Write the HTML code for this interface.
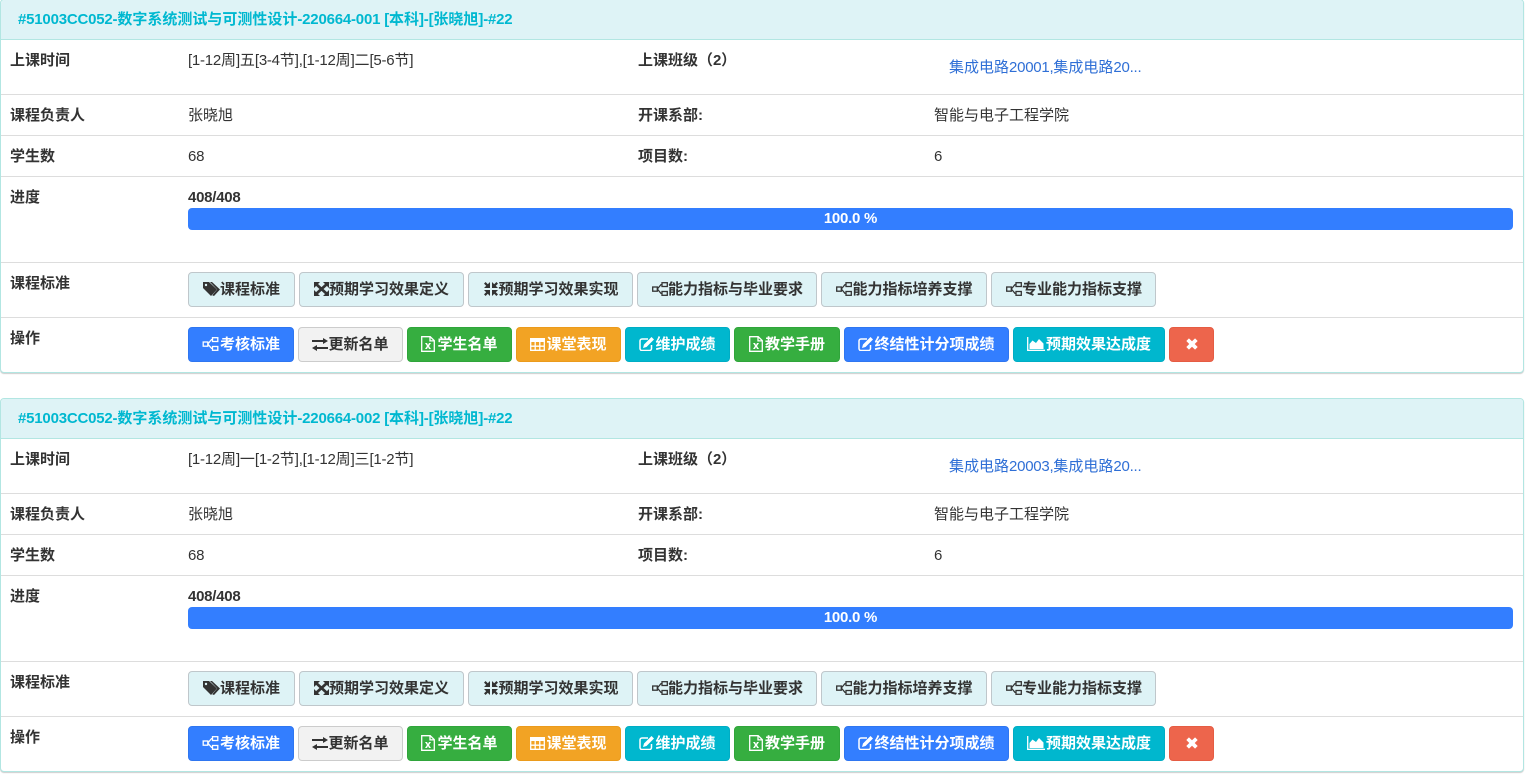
<!DOCTYPE html>
<html><head><meta charset="utf-8"><style>
html,body{margin:0;padding:0;background:#fff;width:1531px;height:783px;overflow:hidden}
body{font:15px/20px "Liberation Sans","Noto Sans CJK SC",sans-serif;color:#333}
i{font-style:normal;letter-spacing:-.25px}
.p{position:absolute;left:0;width:1522px;height:372px;border:1px solid #b2e6e2;border-radius:4px;background:#fff;box-shadow:0 1px 1px rgba(0,0,0,.2)}
.p>*{position:absolute;white-space:nowrap}
.h{left:0;top:0;width:1522px;height:39px;background:#def3f6;border-bottom:1px solid #b2e6e2;border-radius:3px 3px 0 0}
.t{left:17px;top:10px;font-weight:700;color:#00b8d0}
.t i{letter-spacing:-.2px}
.l{height:1px;left:0;width:1522px;background:#ddd}
b{font-weight:700}
.a{color:#2f6fd6}
.bar{left:187px;top:208px;width:1325px;height:22px;background:#337eff;border-radius:4px;color:#fff;font-weight:700;text-align:center;line-height:21px}
.btn{box-sizing:border-box;height:35px;border:1px solid;border-radius:4px;font-weight:700;line-height:33px;text-align:center;top:0}
.btn svg{vertical-align:-2px}
.btn svg.x{vertical-align:-3px;margin-right:2px}
.btn svg.m{margin-left:1px}
.s{background:#def3f6;border-color:#bfc7cb;color:#333;top:272px}
.o{top:327px;color:#fff}
.blue{background:#337eff;border-color:#2f76f0}
.gray{background:#f2f2f2;border-color:#ccc;color:#333}
.green{background:#36ae40;border-color:#30a53b}
.orange{background:#f2a324;border-color:#eb9b1c}
.cyan{background:#00b7ce;border-color:#00adc4}
.red{background:#ed654c;border-color:#e55c43}
</style></head><body>
<svg width="0" height="0" style="position:absolute">
<symbol id="tag" viewBox="0 0 17 14"><path d="M0 0h6l8 7.500-6 6.500L0 6z" fill="currentColor"/><path d="M9 0l8 7.500-6 6.500-1.800-.8 5-5.700L7 0z" fill="currentColor"/><circle cx="3" cy="3" r="1.200" fill="#def3f6"/></symbol>
<symbol id="exp" viewBox="0 0 15 14"><path d="M0 0h6L0 6zM15 0v6L9 0zM0 14V8l6 6zM15 14H9l6-6z" fill="currentColor"/><path d="M2 2l11 10M13 2L2 12" stroke="currentColor" stroke-width="2.800" fill="none"/></symbol>
<symbol id="com" viewBox="0 0 14 14"><path d="M6 6V0L0 6zM8 6V0l6 6zM6 8v6L0 8zM8 8v6l6-6z" fill="currentColor"/><path d="M.8.800l3 3M13.200.8l-3 3M.8 13.200l3-3M13.200 13.200l-3-3" stroke="currentColor" stroke-width="2.200" fill="none"/></symbol>
<symbol id="sit" viewBox="0 0 16 14"><g fill="none" stroke="currentColor" stroke-width="1.300"><rect x=".7" y="5" width="4.600" height="4.200"/><rect x="10" y=".7" width="5.300" height="3.800"/><rect x="10" y="9.500" width="5.300" height="3.800"/><path d="M5.300 7L9 2.600h1M5.300 7L9 11.400h1"/></g></symbol>
<symbol id="exc" viewBox="0 0 16 13"><path d="M0 2h11V0l5 3-5 3V4H0zM16 9H5V7l-5 3 5 3v-2h11z" fill="currentColor"/></symbol>
<symbol id="xls" viewBox="0 0 14 16"><path d="M.7.700h8.500l4.100 4v10.600H.7zM9 .7v4.200h4.300" fill="none" stroke="currentColor" stroke-width="1.300"/><path d="M4 7h2l1 2 1-2h2L8 10l2 3H8l-1-2-1 2H4l2-3z" fill="currentColor"/></symbol>
<symbol id="tab" viewBox="0 0 15 13"><path d="M0 0h15v4H0z" fill="currentColor"/><path d="M.7.700h13.600v11.600H.7zM.7 8.200h13.600M5.200 4v8M9.800 4v8" fill="none" stroke="currentColor" stroke-width="1.300"/></symbol>
<symbol id="edt" viewBox="0 0 15 14"><path d="M9 2H3A2 2 0 0 0 1 4v7.500a2 2 0 0 0 2 2h7.500a2 2 0 0 0 2-2V8" fill="none" stroke="currentColor" stroke-width="1.500"/><path d="M12.500 0L15 2.500 7.500 10 4 11l1-3.500z" fill="currentColor"/></symbol>
<symbol id="are" viewBox="0 0 18 14"><path d="M.7 0v13.300H18" fill="none" stroke="currentColor" stroke-width="1.300"/><path d="M2.500 12V7l3-3.500L9 6l3-4 4.500 4.500V12z" fill="currentColor"/></symbol>
<symbol id="xx" viewBox="0 0 11 11"><path d="M2.700.3L5.500 3 8.300.3l2.400 2.400L8 5.500l2.700 2.800-2.400 2.400L5.500 8l-2.800 2.700L.3 8.300 3 5.500.3 2.700z" fill="currentColor"/></symbol>
</svg>

<div class="p" style="top:-1px">
<div class="h"></div><div class="t"><i>#51003CC052-</i>数字系统测试与可测性设计<i>-220664-001 [</i>本科<i>]-[</i>张晓旭<i>]-#22</i></div>
<b style="left:9px;top:51px">上课时间</b><span style="left:187px;top:51px"><i>[1-12</i>周<i>]</i>五<i>[3-4</i>节<i>],[1-12</i>周<i>]</i>二<i>[5-6</i>节<i>]</i></span>
<b style="left:637px;top:51px">上课班级（<i>2</i>）</b><span class="a" style="left:948px;top:58px">集成电路<i>20001,</i>集成电路<i>20...</i></span>
<div class="l" style="top:94px"></div>
<b style="left:9px;top:106px">课程负责人</b><span style="left:187px;top:106px">张晓旭</span><b style="left:637px;top:106px">开课系部<i>:</i></b><span style="left:933px;top:106px">智能与电子工程学院</span>
<div class="l" style="top:135px"></div>
<b style="left:9px;top:147px">学生数</b><span style="left:187px;top:147px"><i>68</i></span><b style="left:637px;top:147px">项目数<i>:</i></b><span style="left:933px;top:147px"><i>6</i></span>
<div class="l" style="top:176px"></div>
<b style="left:9px;top:188px">进度</b><b style="left:187px;top:188px"><i>408/408</i></b><div class="bar"><i>100.0 %</i></div>
<div class="l" style="top:262px"></div>
<b style="left:9px;top:274px">课程标准</b>
<div class="btn s" style="left:187px;width:107px"><svg width="17" height="14"><use href="#tag"/></svg>课程标准</div>
<div class="btn s" style="left:298px;width:165px"><svg width="15" height="14"><use href="#exp"/></svg>预期学习效果定义</div>
<div class="btn s" style="left:467px;width:165px"><svg width="14" height="14" style="margin-left:2px"><use href="#com"/></svg>预期学习效果实现</div>
<div class="btn s" style="left:636px;width:180px"><svg class="m" width="16" height="14"><use href="#sit"/></svg>能力指标与毕业要求</div>
<div class="btn s" style="left:820px;width:166px"><svg class="m" width="16" height="14"><use href="#sit"/></svg>能力指标培养支撑</div>
<div class="btn s" style="left:990px;width:165px"><svg class="m" width="16" height="14"><use href="#sit"/></svg>专业能力指标支撑</div>
<div class="l" style="top:317px"></div>
<b style="left:9px;top:329px">操作</b>
<div class="btn o blue" style="left:187px;width:106px"><svg width="17" height="14" style="margin-right:1px"><use href="#sit"/></svg>考核标准</div>
<div class="btn o gray" style="left:297px;width:105px"><svg width="16" height="13"><use href="#exc"/></svg>更新名单</div>
<div class="btn o green" style="left:406px;width:105px"><svg class="x" width="14" height="16"><use href="#xls"/></svg>学生名单</div>
<div class="btn o orange" style="left:515px;width:105px"><svg width="15" height="13" style="margin-right:1px"><use href="#tab"/></svg>课堂表现</div>
<div class="btn o cyan" style="left:624px;width:105px"><svg width="15" height="14" style="margin-right:1px"><use href="#edt"/></svg>维护成绩</div>
<div class="btn o green" style="left:733px;width:106px"><svg class="x" width="14" height="16"><use href="#xls"/></svg>教学手册</div>
<div class="btn o blue" style="left:843px;width:165px"><svg width="15" height="14" style="margin-right:1px"><use href="#edt"/></svg>终结性计分项成绩</div>
<div class="btn o cyan" style="left:1012px;width:152px"><svg width="18" height="14" style="margin-right:1px"><use href="#are"/></svg>预期效果达成度</div>
<div class="btn o red" style="left:1168px;width:45px"><svg width="12" height="12" style="vertical-align:-1px"><use href="#xx"/></svg></div>
</div>

<div class="p" style="top:398px">
<div class="h"></div><div class="t"><i>#51003CC052-</i>数字系统测试与可测性设计<i>-220664-002 [</i>本科<i>]-[</i>张晓旭<i>]-#22</i></div>
<b style="left:9px;top:51px">上课时间</b><span style="left:187px;top:51px"><i>[1-12</i>周<i>]</i>一<i>[1-2</i>节<i>],[1-12</i>周<i>]</i>三<i>[1-2</i>节<i>]</i></span>
<b style="left:637px;top:51px">上课班级（<i>2</i>）</b><span class="a" style="left:948px;top:58px">集成电路<i>20003,</i>集成电路<i>20...</i></span>
<div class="l" style="top:94px"></div>
<b style="left:9px;top:106px">课程负责人</b><span style="left:187px;top:106px">张晓旭</span><b style="left:637px;top:106px">开课系部<i>:</i></b><span style="left:933px;top:106px">智能与电子工程学院</span>
<div class="l" style="top:135px"></div>
<b style="left:9px;top:147px">学生数</b><span style="left:187px;top:147px"><i>68</i></span><b style="left:637px;top:147px">项目数<i>:</i></b><span style="left:933px;top:147px"><i>6</i></span>
<div class="l" style="top:176px"></div>
<b style="left:9px;top:188px">进度</b><b style="left:187px;top:188px"><i>408/408</i></b><div class="bar"><i>100.0 %</i></div>
<div class="l" style="top:262px"></div>
<b style="left:9px;top:274px">课程标准</b>
<div class="btn s" style="left:187px;width:107px"><svg width="17" height="14"><use href="#tag"/></svg>课程标准</div>
<div class="btn s" style="left:298px;width:165px"><svg width="15" height="14"><use href="#exp"/></svg>预期学习效果定义</div>
<div class="btn s" style="left:467px;width:165px"><svg width="14" height="14" style="margin-left:2px"><use href="#com"/></svg>预期学习效果实现</div>
<div class="btn s" style="left:636px;width:180px"><svg class="m" width="16" height="14"><use href="#sit"/></svg>能力指标与毕业要求</div>
<div class="btn s" style="left:820px;width:166px"><svg class="m" width="16" height="14"><use href="#sit"/></svg>能力指标培养支撑</div>
<div class="btn s" style="left:990px;width:165px"><svg class="m" width="16" height="14"><use href="#sit"/></svg>专业能力指标支撑</div>
<div class="l" style="top:317px"></div>
<b style="left:9px;top:329px">操作</b>
<div class="btn o blue" style="left:187px;width:106px"><svg width="17" height="14" style="margin-right:1px"><use href="#sit"/></svg>考核标准</div>
<div class="btn o gray" style="left:297px;width:105px"><svg width="16" height="13"><use href="#exc"/></svg>更新名单</div>
<div class="btn o green" style="left:406px;width:105px"><svg class="x" width="14" height="16"><use href="#xls"/></svg>学生名单</div>
<div class="btn o orange" style="left:515px;width:105px"><svg width="15" height="13" style="margin-right:1px"><use href="#tab"/></svg>课堂表现</div>
<div class="btn o cyan" style="left:624px;width:105px"><svg width="15" height="14" style="margin-right:1px"><use href="#edt"/></svg>维护成绩</div>
<div class="btn o green" style="left:733px;width:106px"><svg class="x" width="14" height="16"><use href="#xls"/></svg>教学手册</div>
<div class="btn o blue" style="left:843px;width:165px"><svg width="15" height="14" style="margin-right:1px"><use href="#edt"/></svg>终结性计分项成绩</div>
<div class="btn o cyan" style="left:1012px;width:152px"><svg width="18" height="14" style="margin-right:1px"><use href="#are"/></svg>预期效果达成度</div>
<div class="btn o red" style="left:1168px;width:45px"><svg width="12" height="12" style="vertical-align:-1px"><use href="#xx"/></svg></div>
</div>
</body></html>
